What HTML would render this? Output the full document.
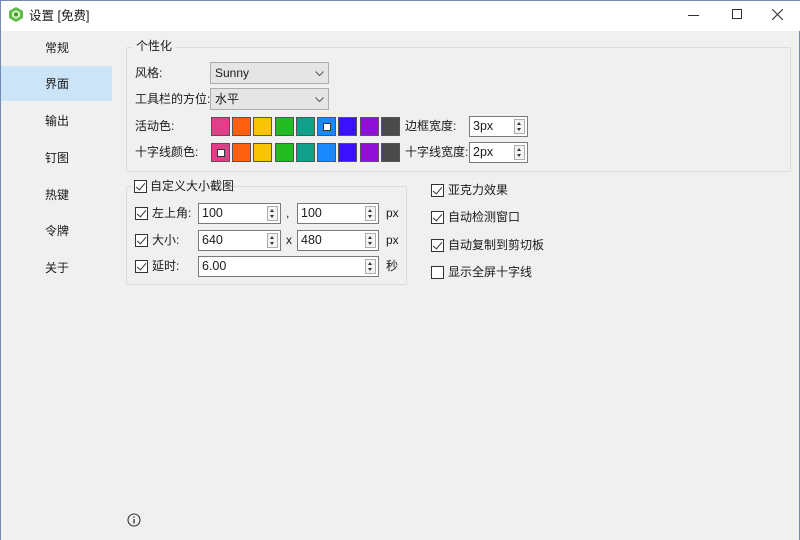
<!DOCTYPE html><html><head><meta charset="utf-8"><style>
*{box-sizing:border-box;margin:0;padding:0}
body{width:800px;height:540px;background:#f0f0f0;font-family:"Liberation Sans","Noto Sans CJK SC",sans-serif;font-size:12px;color:#1a1a1a;position:relative;overflow:hidden;border:1px solid #6f8bb0;border-bottom:none}
.a{position:absolute}
.t{position:absolute;line-height:14px;white-space:nowrap}
.title{left:0;top:0;width:800px;height:30px;background:#fff}
.nav{left:44px}
.sel{left:0;top:65px;width:111px;height:35px;background:#cce4f7}
.gb{border:1px solid #dcdcdc;border-radius:2px}
.lg{background:#f0f0f0;padding:0 3px}
.combo{background:#e5e5e5;border:1px solid #adadad;height:22px;width:119px;padding-left:4px;line-height:20px}
.combo svg{position:absolute;right:4px;top:8px}
.sw{position:absolute;width:19px;height:19px;border:1px solid #555}
.sw i{position:absolute;left:5px;top:5px;width:8px;height:8px;background:#fff;border:1px solid #333}
.in{background:#fff;border:1px solid #7a7a7a;height:21px;padding-left:3px;line-height:19px;font-size:12.5px}
.sp{position:absolute;right:2px;top:2px;width:11px;height:15px;border:1px solid #adadad;background:#f4f4f4}
.sp:before{content:"";position:absolute;left:2px;top:2px;border:2.5px solid transparent;border-bottom:3px solid #333;border-top:none}
.sp:after{content:"";position:absolute;left:2px;bottom:2px;border:2.5px solid transparent;border-top:3px solid #333;border-bottom:none}
.cb{position:absolute;width:13px;height:13px;border:1px solid #333;background:#fff}
.cb.k:after{content:"";position:absolute;left:3px;top:0px;width:4px;height:8px;border-right:1.3px solid #333;border-bottom:1.3px solid #333;transform:rotate(40deg)}
</style></head><body>
<div class="a title"></div>
<svg class="a" style="left:8px;top:6px" width="14" height="15" viewBox="0 0 14 15"><path d="M7 0 L14 4 L14 11 L7 15 L0 11 L0 4Z" fill="#5dbb46"/><path d="M7 3 L11 5.5 L11 9.5 L7 12 L3 9.5 L3 5.5Z" fill="#d6f0c8"/><circle cx="7" cy="7.5" r="2" fill="#3a9a2a"/></svg>
<div class="t" style="left:28px;top:8px;font-size:12.5px">设置 [免费]</div>
<div class="a" style="left:687px;top:14px;width:11px;height:1px;background:#333"></div>
<div class="a" style="left:731px;top:8px;width:10px;height:10px;border:1px solid #333"></div>
<svg class="a" style="left:771px;top:8px" width="11" height="11"><path d="M0 0L11 11M11 0L0 11" stroke="#333" stroke-width="1.1"/></svg>
<div class="a sel"></div>
<div class="t nav" style="top:40px">常规</div>
<div class="t nav" style="top:76px">界面</div>
<div class="t nav" style="top:113px">输出</div>
<div class="t nav" style="top:150px">钉图</div>
<div class="t nav" style="top:187px">热键</div>
<div class="t nav" style="top:223px">令牌</div>
<div class="t nav" style="top:260px">关于</div>

<div class="a gb" style="left:125px;top:46px;width:665px;height:125px"></div>
<div class="t lg" style="left:132px;top:38px">个性化</div>
<div class="t" style="left:134px;top:65px">风格:</div>
<div class="a combo" style="left:209px;top:61px">Sunny<svg width="9" height="6"><path d="M0.5 0.5L4.5 4.5L8.5 0.5" stroke="#555" fill="none"/></svg></div>
<div class="t" style="left:134px;top:91px">工具栏的方位:</div>
<div class="a combo" style="left:209px;top:87px">水平<svg width="9" height="6"><path d="M0.5 0.5L4.5 4.5L8.5 0.5" stroke="#555" fill="none"/></svg></div>
<div class="t" style="left:134px;top:118px">活动色:</div>
<div class="t" style="left:134px;top:144px">十字线颜色:</div>
<div class="sw" style="left:210px;top:116px;background:#e0408a"></div>
<div class="sw" style="left:231px;top:116px;background:#ff6010"></div>
<div class="sw" style="left:252px;top:116px;background:#f8c400"></div>
<div class="sw" style="left:274px;top:116px;background:#22bb22"></div>
<div class="sw" style="left:295px;top:116px;background:#10a08a"></div>
<div class="sw" style="left:316px;top:116px;background:#1a88ff"><i></i></div>
<div class="sw" style="left:337px;top:116px;background:#3a10ff"></div>
<div class="sw" style="left:359px;top:116px;background:#9010d8"></div>
<div class="sw" style="left:380px;top:116px;background:#4a4a4a"></div>
<div class="sw" style="left:210px;top:142px;background:#e0408a"><i></i></div>
<div class="sw" style="left:231px;top:142px;background:#ff6010"></div>
<div class="sw" style="left:252px;top:142px;background:#f8c400"></div>
<div class="sw" style="left:274px;top:142px;background:#22bb22"></div>
<div class="sw" style="left:295px;top:142px;background:#10a08a"></div>
<div class="sw" style="left:316px;top:142px;background:#1a88ff"></div>
<div class="sw" style="left:337px;top:142px;background:#3a10ff"></div>
<div class="sw" style="left:359px;top:142px;background:#9010d8"></div>
<div class="sw" style="left:380px;top:142px;background:#4a4a4a"></div>
<div class="t" style="left:404px;top:118px">边框宽度:</div>
<div class="a in" style="left:468px;top:115px;width:59px">3px<span class="sp"></span></div>
<div class="t" style="left:404px;top:144px">十字线宽度:</div>
<div class="a in" style="left:468px;top:141px;width:59px">2px<span class="sp"></span></div>

<div class="a gb" style="left:125px;top:185px;width:281px;height:99px"></div>
<div class="a lg" style="left:130px;top:178px;width:102px;height:16px"></div>
<div class="cb k" style="left:133px;top:179px"></div>
<div class="t" style="left:149px;top:178px">自定义大小截图</div>
<div class="cb k" style="left:134px;top:206px"></div><div class="t" style="left:151px;top:205px">左上角:</div>
<div class="a in" style="left:197px;top:202px;width:83px">100<span class="sp"></span></div>
<div class="t" style="left:285px;top:205px">,</div>
<div class="a in" style="left:296px;top:202px;width:82px">100<span class="sp"></span></div>
<div class="t" style="left:385px;top:205px">px</div>
<div class="cb k" style="left:134px;top:233px"></div><div class="t" style="left:151px;top:232px">大小:</div>
<div class="a in" style="left:197px;top:229px;width:83px">640<span class="sp"></span></div>
<div class="t" style="left:285px;top:232px">x</div>
<div class="a in" style="left:296px;top:229px;width:82px">480<span class="sp"></span></div>
<div class="t" style="left:385px;top:232px">px</div>
<div class="cb k" style="left:134px;top:259px"></div><div class="t" style="left:151px;top:258px">延时:</div>
<div class="a in" style="left:197px;top:255px;width:181px">6.00<span class="sp"></span></div>
<div class="t" style="left:385px;top:258px">秒</div>

<div class="cb k" style="left:430px;top:183px"></div><div class="t" style="left:447px;top:182px">亚克力效果</div>
<div class="cb k" style="left:430px;top:210px"></div><div class="t" style="left:447px;top:209px">自动检测窗口</div>
<div class="cb k" style="left:430px;top:238px"></div><div class="t" style="left:447px;top:237px">自动复制到剪切板</div>
<div class="cb" style="left:430px;top:265px"></div><div class="t" style="left:447px;top:264px">显示全屏十字线</div>

<svg class="a" style="left:126px;top:512px" width="14" height="14"><circle cx="7" cy="7" r="6" fill="none" stroke="#333" stroke-width="1.1"/><path d="M7 6V10.5" stroke="#333" stroke-width="1.3"/><circle cx="7" cy="4" r="0.8" fill="#333"/></svg>
</body></html>
